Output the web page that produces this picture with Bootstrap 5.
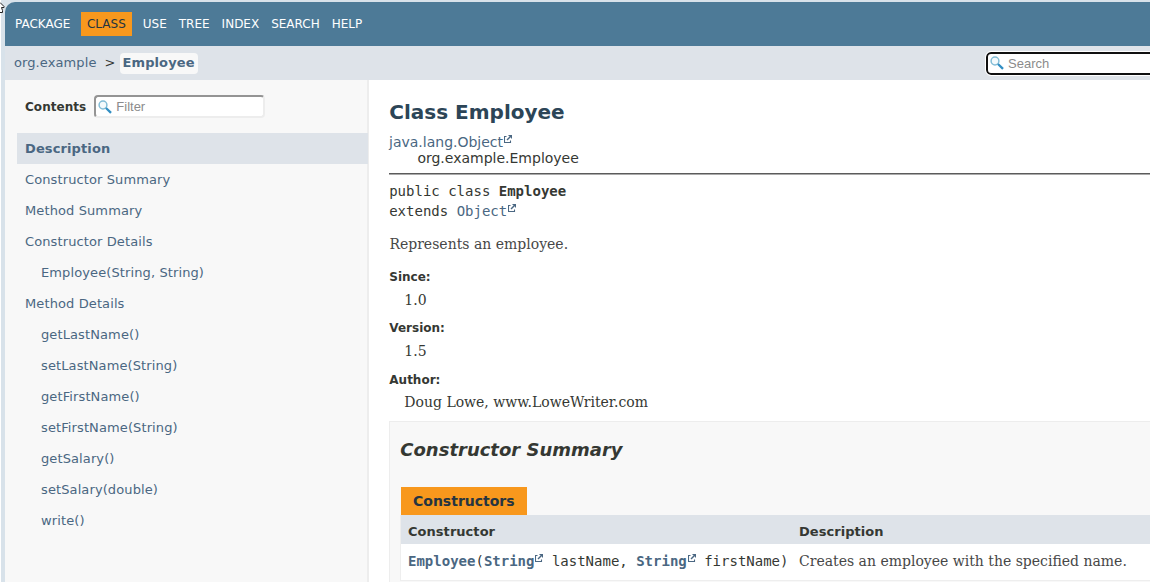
<!DOCTYPE html>
<html lang="en">
<head>
<meta charset="utf-8">
<title>Employee</title>
<link href="https://cdn.jsdelivr.net/npm/bootstrap@5.3.0/dist/css/bootstrap.min.css" rel="stylesheet">
<style>
html,body{height:100%;overflow:hidden}
body{font:14px/16px "DejaVu Sans",sans-serif;color:#353833;background:#d8e2ea;border-left:1px solid #fff;padding:2px 0 0 4px}
a{color:#4a6782;text-decoration:none}
.shell{height:580px;border-top-left-radius:10px}
.topbar{height:44px;background:#4d7a97;font-size:12px;padding:0 0 1px 5px}
.topbar a{color:#fff;padding:5px 5px;margin-right:2px;line-height:14px}
.topbar a.active{background:#f8981d;color:#253441;padding:5px 6px;margin:0 6px 0 3.6px}
.crumbs{height:34px;background:#dee3e9;font-size:13px;padding-left:9px;letter-spacing:.1px}
.crumbs .here{background:#f8f8f8;border-radius:4px;padding:2px 3px 3px;margin-left:4px;font-weight:700}
.field{background:#fff;height:23px;color:#8b8b8b;font:13px/19px "Liberation Sans",sans-serif;letter-spacing:0}
.field svg{margin:0 4.5px 0 1.5px}
.searchbox{width:190px;margin-right:-26px;border:2px solid #101010;border-radius:5px;outline:1px solid #fff}
.filter{width:171px;border:2px solid;border-color:#949494 #ededed #ededed #949494;border-radius:4px;margin-left:8px}
.toc{width:364px;background:#f8f8f8;border-right:2px solid #ededed;font-size:13px;padding-left:12px;letter-spacing:.11px}
.toc-head{height:53px;padding-left:8px}
.toc-head b{font-size:12px;letter-spacing:.05px}
.toc a{height:31px;padding-left:8px}
.toc a.sub{padding-left:24px}
.toc a.current{background:#dee3e9;font-weight:700;margin-right:-1px}
.doc{padding:20px 0 0 20px}
.doc h1{font-size:20px;line-height:24px;font-weight:700;color:#2c4557;margin:0 0 10px;padding-left:.3px}
.inherit{padding-left:28.4px}
.rule{height:2px;background:#5b5b5b;border-bottom:1px solid #aaa;margin-top:7px}
.mono{font-family:"DejaVu Sans Mono",monospace}
.serif{font-family:"DejaVu Serif",serif}
.sig{line-height:20px;padding:6px 0 0 .2px}
.intro{margin-top:15px;padding-left:.4px;color:#474747}
.notes{margin:0;padding-left:.3px}
.notes dt{font-size:12px;line-height:16px;height:16px;margin-top:16.5px}
.notes dd{margin:7px 0 0 15px;line-height:16px;height:16px}
.notes dt+dd+dt{margin-top:12.3px}
.notes dt:nth-of-type(3){margin-top:13px}
.notes dd:last-child{margin-top:6.3px}
.summary{border:1px solid #ededed;border-right:0;background:#f8f8f8;height:173px;margin-top:11px;padding:18px 0 0 10px}
.summary h2{font-size:18px;line-height:20px;font-weight:700;font-style:italic;margin:0 0 27px .3px}
.caption-tab{background:#f8981d;color:#253441;font-weight:700;height:28px;width:126px;padding-left:12px;margin-left:1px}
.grid{border:1px solid #eee;border-top:0;background:#fff;width:780px}
.grid .heads{background:#dee3e9;height:29px;font-size:13px;letter-spacing:.04px;font-weight:700;padding-top:4px}
.grid .vals{height:36px;padding-bottom:2px}
.grid .first{width:398px;padding-left:7px}
.ext{width:8px;height:8px;margin-left:1px;vertical-align:4px}
.cursor{left:0;top:0}
</style>
</head>
<body>
<svg width="0" height="0" class="position-absolute"><defs>
<symbol id="ext" viewBox="0 0 8 8"><path d="M2.5 1.5h-2v6h6v-2" fill="none" stroke="#4a6782" stroke-width="1.1"/><path d="m3 5 3-3" stroke="#4a6782" stroke-width="1.4"/><path d="M4 0h4v4L6.6 2.6 5.4 1.4z" fill="#4a6782"/></symbol>
<symbol id="glass" viewBox="0 0 14 14"><circle cx="5" cy="5" r="3.9" fill="#f4fafc" stroke="#82bcd6" stroke-width="1.5"/><path d="m8 8 5 4.8" stroke="#318ec3" stroke-width="2.3"/></symbol>
</defs></svg>
<svg class="cursor position-absolute" width="5" height="14" viewBox="0 0 5 14"><path d="M0 2.5 4 6.5v1H1.5l1 3v2H0" fill="#fff" stroke="#222"/></svg>
<div class="shell d-flex flex-column overflow-hidden">
<nav class="topbar d-flex align-items-center flex-shrink-0"><a href="#">PACKAGE</a><a href="#" class="active">CLASS</a><a href="#">USE</a><a href="#">TREE</a><a href="#">INDEX</a><a href="#">SEARCH</a><a href="#">HELP</a></nav>
<div class="crumbs d-flex align-items-center justify-content-between flex-shrink-0">
<div class="d-flex align-items-center"><a href="#">org.example</a><span class="ms-2">&gt;</span><a href="#" class="here">Employee</a></div>
<div class="field searchbox d-flex align-items-center"><svg width="14" height="14"><use href="#glass"/></svg>Search</div>
</div>
<div class="d-flex flex-grow-1">
<aside class="toc flex-shrink-0">
<div class="toc-head d-flex align-items-center"><b>Contents</b><div class="field filter d-flex align-items-center"><svg width="14" height="14"><use href="#glass"/></svg>Filter</div></div>
<nav class="d-flex flex-column">
<a href="#" class="current d-flex align-items-center">Description</a>
<a href="#" class="d-flex align-items-center">Constructor Summary</a>
<a href="#" class="d-flex align-items-center">Method Summary</a>
<a href="#" class="d-flex align-items-center">Constructor Details</a>
<a href="#" class="sub d-flex align-items-center">Employee(String, String)</a>
<a href="#" class="d-flex align-items-center">Method Details</a>
<a href="#" class="sub d-flex align-items-center">getLastName()</a>
<a href="#" class="sub d-flex align-items-center">setLastName(String)</a>
<a href="#" class="sub d-flex align-items-center">getFirstName()</a>
<a href="#" class="sub d-flex align-items-center">setFirstName(String)</a>
<a href="#" class="sub d-flex align-items-center">getSalary()</a>
<a href="#" class="sub d-flex align-items-center">setSalary(double)</a>
<a href="#" class="sub d-flex align-items-center">write()</a>
</nav>
</aside>
<main class="doc flex-grow-1 bg-white overflow-hidden">
<h1>Class Employee</h1>
<div><a href="#">java.lang.Object<svg class="ext"><use href="#ext"/></svg></a></div>
<div class="inherit">org.example.Employee</div>
<div class="rule"></div>
<div class="sig mono">public class <b>Employee</b><br>extends <a href="#">Object<svg class="ext"><use href="#ext"/></svg></a></div>
<div class="intro serif">Represents an employee.</div>
<dl class="notes"><dt>Since:</dt><dd class="serif">1.0</dd><dt>Version:</dt><dd class="serif">1.5</dd><dt>Author:</dt><dd class="serif">Doug Lowe, www.LoweWriter.com</dd></dl>
<section class="summary">
<h2>Constructor Summary</h2>
<div class="caption-tab d-flex align-items-center">Constructors</div>
<div class="grid">
<div class="heads d-flex align-items-center"><div class="first">Constructor</div><div>Description</div></div>
<div class="vals d-flex align-items-center"><div class="first mono text-nowrap"><a href="#"><b>Employee</b></a>(<a href="#"><b>String</b><svg class="ext"><use href="#ext"/></svg></a> lastName, <a href="#"><b>String</b><svg class="ext"><use href="#ext"/></svg></a> firstName)</div><div class="intro serif text-nowrap m-0 p-0">Creates an employee with the specified name.</div></div>
</div>
</section>
</main>
</div>
</div>
<script src="https://cdn.jsdelivr.net/npm/bootstrap@5.3.0/dist/js/bootstrap.bundle.min.js"></script>
</body>
</html>
